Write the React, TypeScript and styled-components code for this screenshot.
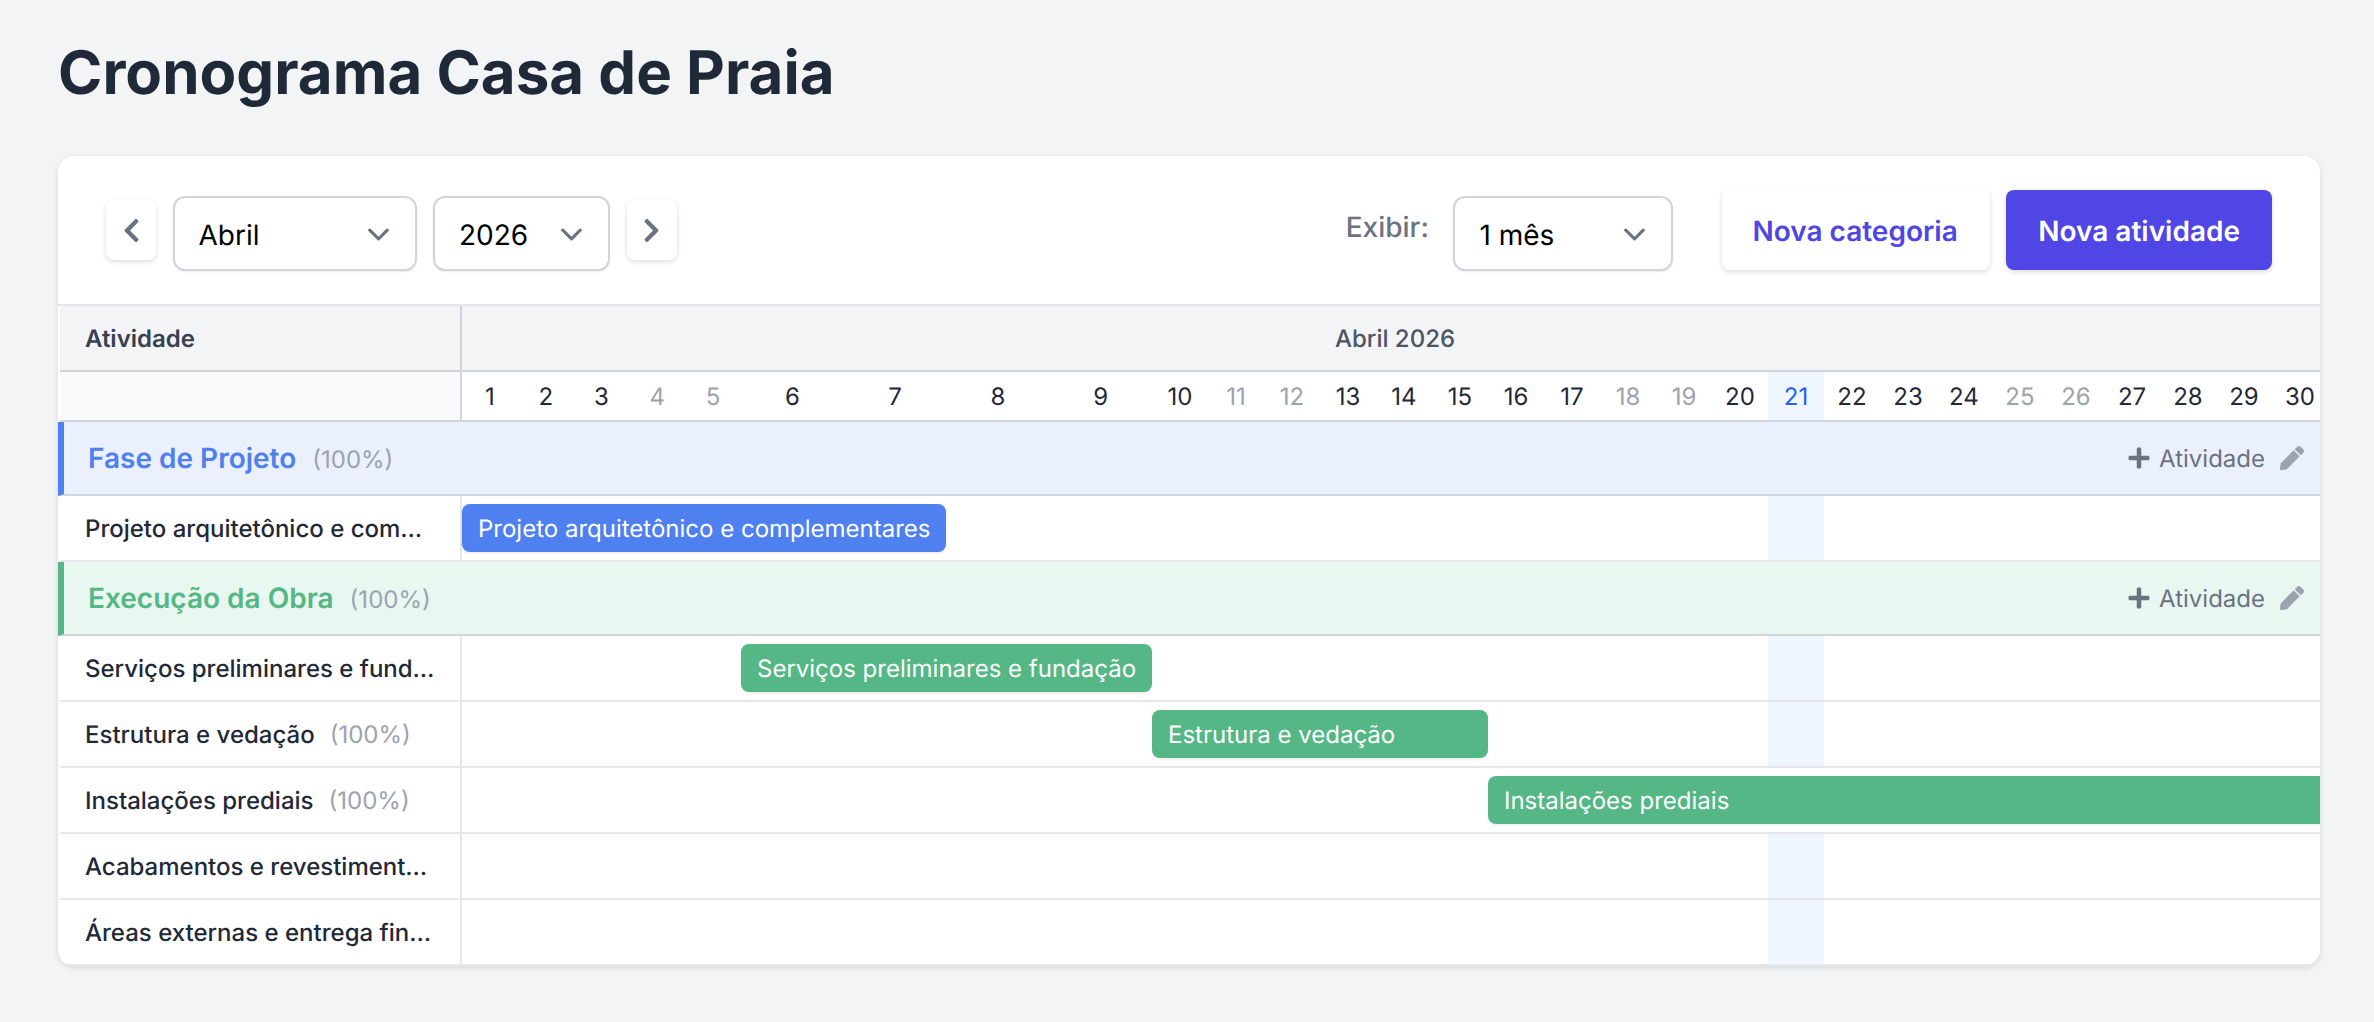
import { createGlobalStyle, styled } from "styled-components";
import { FaChevronLeft, FaChevronRight, FaPen, FaPlus } from "react-icons/fa";

type Day = {
  day: number;
  weekend: boolean;
};

type Activity = {
  name: string;
  bar?: { start: number; end: number };
  covered?: boolean;
};

type Phase = {
  name: string;
  tone: "blue" | "green";
  activities: Activity[];
};

const tones = {
  blue: { main: "#4f80ef", soft: "#eaf0fd" },
  green: { main: "#55b785", soft: "#e8f7f0" },
};

const TODAY = 21;
const weekendDays = [4, 5, 11, 12, 18, 19, 25, 26];
const days: Day[] = Array.from({ length: 30 }, (_, i) => ({
  day: i + 1,
  weekend: weekendDays.includes(i + 1),
}));

const dayWidth = (day: number) => {
  if (day <= 5) return "55.8px";
  if (day <= 9) return "102.75px";
  return "56px";
};
const columns = days.map((d) => dayWidth(d.day)).join(" ");

const phases: Phase[] = [
  {
    name: "Fase de Projeto",
    tone: "blue",
    activities: [{ name: "Projeto arquitetônico e complementares", bar: { start: 1, end: 8 } }],
  },
  {
    name: "Execução da Obra",
    tone: "green",
    activities: [
      { name: "Serviços preliminares e fundação", bar: { start: 6, end: 10 } },
      { name: "Estrutura e vedação", bar: { start: 10, end: 16 } },
      { name: "Instalações prediais", bar: { start: 16, end: 31 }, covered: true },
      { name: "Acabamentos e revestimentos" },
      { name: "Áreas externas e entrega final" },
    ],
  },
];

const Chevron = () => (
  <svg width="21" height="13" viewBox="5.2 7.2 9.6 5.6" fill="none" stroke="#6b7280" strokeWidth="1.4" strokeLinecap="round" strokeLinejoin="round">
    <path d="M6 8l4 4 4-4" />
  </svg>
);

const App = (): JSX.Element => {
  return (
    <Page>
      <GlobalStyle />
      <Title>Cronograma Casa de Praia</Title>
      <Card>
        <Toolbar>
          <ToolGroup>
            <NavButton>
              <FaChevronLeft size={27} />
            </NavButton>
            <SelectBox $width={244}>
              <span>Abril</span>
              <Chevron />
            </SelectBox>
            <SelectBox $width={177}>
              <span>2026</span>
              <Chevron />
            </SelectBox>
            <NavButton>
              <FaChevronRight size={27} />
            </NavButton>
          </ToolGroup>
          <ToolGroup>
            <ShowLabel>Exibir:</ShowLabel>
            <SelectBox $width={220}>
              <span>1 mês</span>
              <Chevron />
            </SelectBox>
            <ActionButton>Nova categoria</ActionButton>
            <ActionButton $primary>Nova atividade</ActionButton>
          </ToolGroup>
        </Toolbar>
        <Table>
          <HeaderRow>
            <HeaderName>Atividade</HeaderName>
            <MonthCell>Abril 2026</MonthCell>
          </HeaderRow>
          <DaysRow>
            <DaysSpacer />
            <DaysGrid>
              {days.map((d) => (
                <DayCell key={d.day} $weekend={d.weekend} $today={d.day === TODAY}>
                  {d.day}
                </DayCell>
              ))}
            </DaysGrid>
          </DaysRow>
          {phases.map((phase) => (
            <div key={phase.name}>
              <PhaseRow $tone={phase.tone}>
                <PhaseName $tone={phase.tone}>
                  {phase.name}
                  <PhasePercent>(100%)</PhasePercent>
                </PhaseName>
                <PhaseActions>
                  <AddActivity>
                    <FaPlus size={24} />
                    Atividade
                  </AddActivity>
                  <EditIcon>
                    <FaPen size={24} />
                  </EditIcon>
                </PhaseActions>
              </PhaseRow>
              {phase.activities.map((activity) => (
                <ActivityRow key={activity.name}>
                  <ActivityName>
                    {activity.name}
                    <ActivityPercent>(100%)</ActivityPercent>
                  </ActivityName>
                  <Track>
                    {!activity.covered && <TodayColumn />}
                    {activity.bar && (
                      <Bar $tone={phase.tone} $start={activity.bar.start} $end={activity.bar.end}>
                        {activity.name}
                      </Bar>
                    )}
                  </Track>
                </ActivityRow>
              ))}
            </div>
          ))}
        </Table>
      </Card>
    </Page>
  );
};

export default App;

const GlobalStyle = createGlobalStyle`
  html, body {
    margin: 0;
    background-color: #f3f4f6;
    font-family: Inter, "Liberation Sans", sans-serif;
    text-rendering: geometricPrecision;
  }

  * {
    box-sizing: border-box;
  }
`;

const Page = styled.div`
  width: 2374px;
  height: 1022px;
  padding: 37px 54px 0 58px;
  overflow: hidden;
`;

const Title = styled.h1`
  margin: 0 0 47px;
  font-size: 60px;
  line-height: 72px;
  font-weight: 700;
  color: #1f2937;
`;

const Card = styled.div`
  background-color: #ffffff;
  border-radius: 16px;
  box-shadow: 0 2px 6px rgba(0, 0, 0, 0.12);
  overflow: hidden;
`;

const Toolbar = styled.div`
  height: 148px;
  padding: 0 48px;
  display: flex;
  align-items: center;
  justify-content: space-between;
`;

const ToolGroup = styled.div`
  display: flex;
  align-items: center;
  gap: 16.5px;
`;

const NavButton = styled.button`
  width: 50px;
  height: 60px;
  padding: 0;
  display: flex;
  align-items: center;
  justify-content: center;
  border: none;
  border-radius: 8px;
  color: #6b7280;
  background-color: #ffffff;
  box-shadow: 0 2px 5px rgba(0, 0, 0, 0.14);
`;

const SelectBox = styled.div<{ $width: number }>`
  width: ${(p) => p.$width}px;
  height: 75px;
  margin-top: 7px;
  padding: 2px 26px 0 24px;
  display: flex;
  align-items: center;
  justify-content: space-between;
  font-size: 28px;
  color: #000000;
  background-color: #ffffff;
  border: 2px solid #d1d5db;
  border-radius: 12px;
  box-shadow: 0 1px 2px rgba(0, 0, 0, 0.08);
`;

const ShowLabel = styled.span`
  margin-right: 8px;
  margin-top: -6px;
  font-size: 28px;
  font-weight: 500;
  color: #6b7280;
`;

const ActionButton = styled.button<{ $primary?: boolean }>`
  height: 80px;
  padding: ${(p) => (p.$primary ? "2px 32px 0" : "2px 32px 0 30.5px")};
  margin-left: ${(p) => (p.$primary ? "0" : "32px")};
  font-family: inherit;
  font-size: 28px;
  font-weight: 600;
  border: none;
  border-radius: 8px;
  color: ${(p) => (p.$primary ? "#ffffff" : "#4f46e5")};
  background-color: ${(p) => (p.$primary ? "#4f46e5" : "#ffffff")};
  box-shadow: 0 2px 5px rgba(0, 0, 0, 0.14);
  text-rendering: geometricPrecision;
`;

const Table = styled.div`
  border-top: 2px solid #e5e7eb;
`;

const HeaderRow = styled.div`
  height: 66px;
  margin-left: 2px;
  display: flex;
  background-color: #f3f4f6;
  border-bottom: 2px solid #d1d5db;
`;

const HeaderName = styled.div`
  flex: 0 0 402px;
  padding-left: 25px;
  display: flex;
  align-items: center;
  font-size: 24px;
  font-weight: 600;
  color: #374151;
  border-right: 2px solid #d1d5db;
`;

const MonthCell = styled.div`
  flex: 0 0 1866px;
  display: flex;
  align-items: center;
  justify-content: center;
  font-size: 24px;
  font-weight: 500;
  color: #4b5563;
`;

const DaysRow = styled.div`
  height: 50px;
  margin-left: 2px;
  display: flex;
  border-bottom: 2px solid #d1d5db;
`;

const DaysSpacer = styled.div`
  flex: 0 0 402px;
  background-color: #f9fafb;
  border-right: 2px solid #d1d5db;
`;

const DaysGrid = styled.div`
  flex: none;
  display: grid;
  grid-template-columns: ${columns};
`;

const DayCell = styled.div<{ $weekend: boolean; $today: boolean }>`
  display: flex;
  align-items: center;
  justify-content: center;
  font-size: 24px;
  color: ${(p) => (p.$today ? "#2563eb" : p.$weekend ? "#9ca3af" : "#1f2937")};
  background-color: ${(p) => (p.$today ? "#eff6ff" : "transparent")};
`;

const PhaseRow = styled.div<{ $tone: Phase["tone"] }>`
  height: 74px;
  padding: 0 16px 0 24px;
  display: flex;
  align-items: center;
  justify-content: space-between;
  background-color: ${(p) => tones[p.$tone].soft};
  border-left: 6px solid ${(p) => tones[p.$tone].main};
  border-bottom: 2px solid #d1d5db;
`;

const PhaseName = styled.div<{ $tone: Phase["tone"] }>`
  font-size: 28px;
  font-weight: 600;
  color: ${(p) => tones[p.$tone].main};
`;

const PhasePercent = styled.span`
  margin-left: 16px;
  font-size: 24px;
  font-weight: 400;
  color: #9ca3af;
`;

const PhaseActions = styled.div`
  display: flex;
  align-items: center;
  gap: 15px;
`;

const AddActivity = styled.div`
  display: flex;
  align-items: center;
  gap: 8px;
  font-size: 24px;
  color: #6b7280;
`;

const EditIcon = styled.div`
  display: flex;
  color: #9ca3af;
`;

const ActivityRow = styled.div`
  height: 66px;
  margin-left: 2px;
  display: flex;
  border-bottom: 2px solid #e5e7eb;
`;

const ActivityName = styled.div`
  flex: 0 0 402px;
  padding: 1px 25.5px 0 25px;
  line-height: 64px;
  font-size: 24px;
  font-weight: 500;
  color: #1f2937;
  white-space: nowrap;
  overflow: hidden;
  text-overflow: ellipsis;
  border-right: 2px solid #e5e7eb;
`;

const ActivityPercent = styled.span`
  margin-left: 15px;
  font-weight: 400;
  color: #9ca3af;
`;

const Track = styled.div`
  flex: none;
  display: grid;
  grid-template-columns: ${columns};
  grid-template-rows: 64px;
`;

const TodayColumn = styled.div`
  grid-column: ${TODAY} / ${TODAY + 1};
  grid-row: 1;
  background-color: #eff6ff;
`;

const Bar = styled.div<{ $tone: Phase["tone"]; $start: number; $end: number }>`
  grid-column: ${(p) => p.$start} / ${(p) => p.$end};
  grid-row: 1;
  margin: 8px 0;
  padding: 0 16px;
  display: flex;
  align-items: center;
  font-size: 24px;
  color: #ffffff;
  white-space: nowrap;
  border-radius: 8px;
  background-color: ${(p) => tones[p.$tone].main};
  box-shadow: 0 1px 3px rgba(0, 0, 0, 0.1);
`;
